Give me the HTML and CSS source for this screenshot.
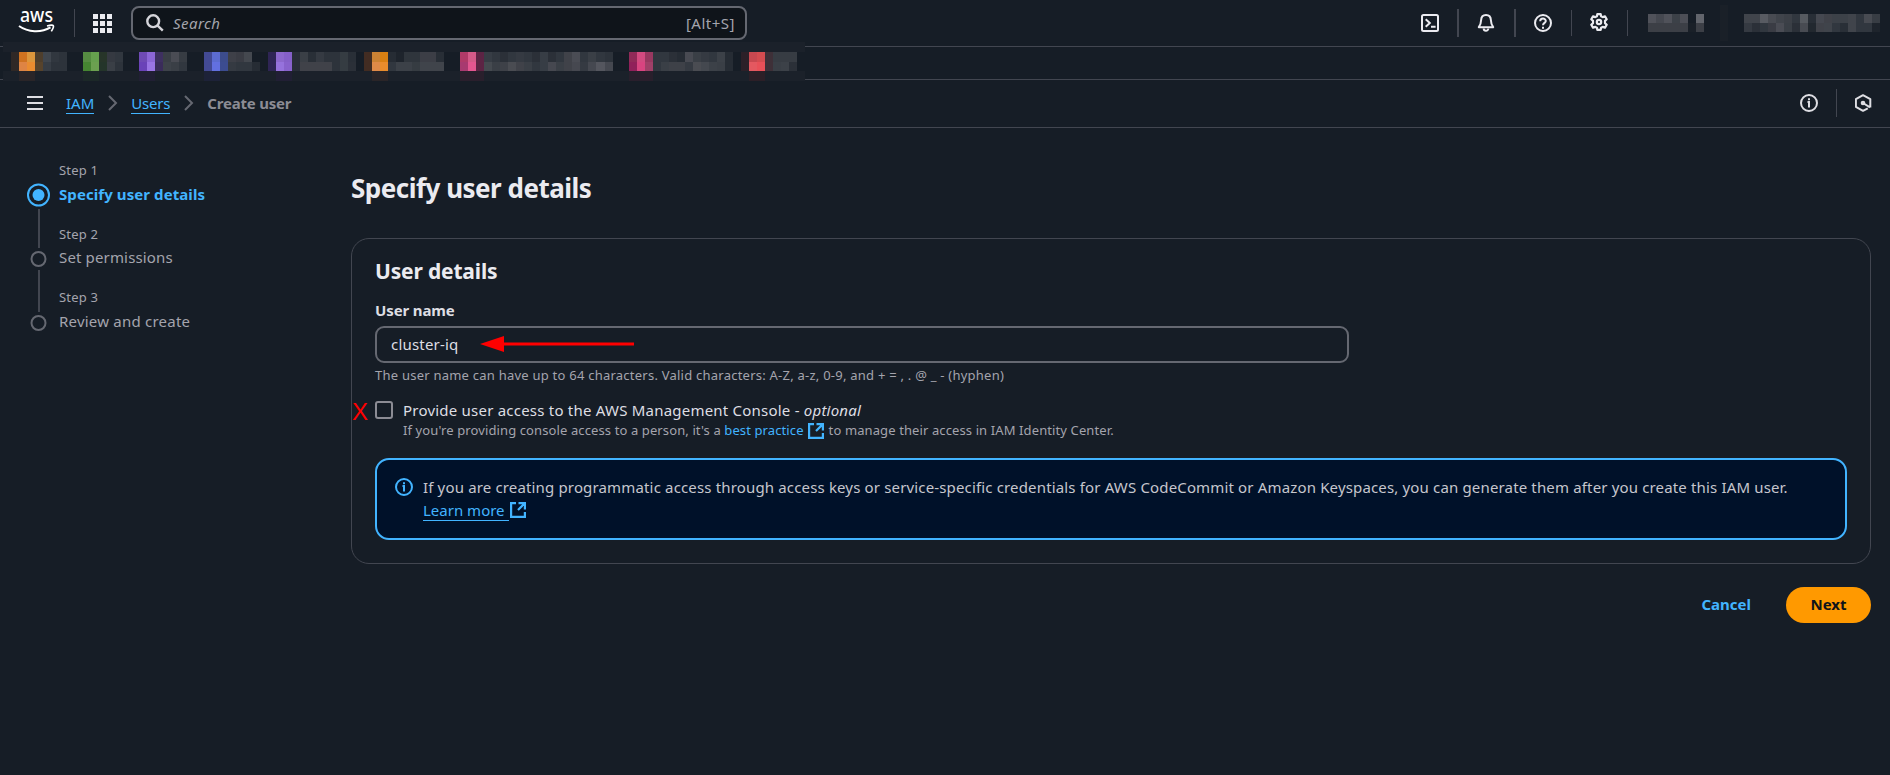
FILE: index.html
```html
<!DOCTYPE html>
<html lang="en">
<head>
<meta charset="utf-8">
<title>Create user | IAM</title>
<link rel="stylesheet" href="styles.css">
</head>
<body>
<header class="topbar">
  <svg class="logo" width="38" height="32" viewBox="0 0 38 32"><text x="2" y="15" class="logo-text" textLength="33" lengthAdjust="spacingAndGlyphs">aws</text><path d="M1 19C10 25.400 23 26 32.500 20.400" fill="none" stroke="#fff" stroke-width="2"/><path d="M29 19q5.500-1.600 6.300-.3t-2 5.700" fill="none" stroke="#fff" stroke-width="1.700"/></svg>
  <span class="divider"></span>
  <svg class="apps" width="19" height="19" viewBox="0 0 19 19" fill="#ebebf0"><path d="M0 0h5v5H0zM7 0h5v5H7zM14 0h5v5h-5zM0 7h5v5H0zM7 7h5v5H7zM14 7h5v5h-5zM0 14h5v5H0zM7 14h5v5H7zM14 14h5v5h-5z"/></svg>
  <div class="search">
    <svg width="18" height="18" viewBox="0 0 18 18" fill="none" stroke="#d5d5da" stroke-width="2.4"><circle cx="7.2" cy="7.2" r="5.9"/><path d="M11.4 11.4L16.8 16.6"/></svg>
    <span class="t search-hint">Search</span>
    <span class="t search-key">[Alt+S]</span>
  </div>
  <div class="tools">
    <svg width="18" height="18" viewBox="0 0 18 18" fill="none" stroke="#ebebf0" stroke-width="2"><rect x="1" y="1" width="16" height="16" rx="1.5"/><path d="M4.7 5.2L8.8 9l-4.100 3.800M10 12.700h4.600"/></svg>
    <span class="divider thick"></span>
    <svg class="bell" width="18" height="18" viewBox="0 0 18 18" fill="none" stroke="#ebebf0" stroke-width="2" stroke-linejoin="round"><path d="M1.800 13.200C3.400 11 4 9.800 4.100 6.300 4.200 3 6 1 9 1s4.800 2 4.900 5.300c.1 3.500.7 4.700 2.300 6.900z"/><path d="M6.700 14.500a2.300 2.300 0 0 0 4.600 0"/></svg>
    <span class="divider thick"></span>
    <svg class="help" width="18" height="18" viewBox="0 0 18 18" fill="none" stroke="#ebebf0" stroke-width="2"><circle cx="9" cy="9" r="8"/><path d="M6.200 7.300C6.200 3.700 11.800 3.800 11.800 7 11.800 8.900 9 8.900 9 11.300M9 12.700v2"/></svg>
    <span class="divider short"></span>
    <svg class="gear" width="18" height="18" viewBox="0 0 18 18" fill="none" stroke="#ebebf0" stroke-width="2.200" stroke-linejoin="round"><path d="M7.300 1.100h3.400l.4 2.100 1.600.9 2.300-.8 1.700 2.900L15 7.900v2.200l1.700 1.700-1.700 2.900-2.300-.8-1.600.9-.4 2.100H7.300l-.4-2.100-1.600-.9-2.300.8-1.700-2.900L3 10.100V7.900L1.300 6.200 3 3.300l2.300.8 1.600-.9z"/><circle cx="9" cy="9" r="2.200"/></svg>
    <span class="divider short"></span>
    <svg class="account" id="account" width="242" height="40" shape-rendering="crispEdges"></svg>
  </div>
</header>
<div class="favorites"><svg class="favorites-items" id="favorites" width="802" height="39" shape-rendering="crispEdges"></svg></div>
<nav class="crumbs">
  <svg class="menu" width="16" height="14" viewBox="0 0 16 14" fill="#dedee3"><path d="M0 0h16v2H0zM0 6h16v2H0zM0 12h16v2H0z"/></svg>
  <a class="t crumb-link">IAM</a>
  <svg class="chev" width="10" height="16" viewBox="0 0 10 16" fill="none" stroke="#656871" stroke-width="2"><path d="M1 1l7 7-7 7"/></svg>
  <a class="t crumb-link users">Users</a>
  <svg class="chev" width="10" height="16" viewBox="0 0 10 16" fill="none" stroke="#656871" stroke-width="2"><path d="M1 1l7 7-7 7"/></svg>
  <span class="t crumb-now">Create user</span>
  <div class="panel-tools">
    <svg width="18" height="18" viewBox="0 0 18 18" fill="none" stroke="#dedee3" stroke-width="2"><circle cx="9" cy="9" r="8"/><path d="M9 4.200v2M7.500 8H9v5.500"/></svg>
    <span class="divider"></span>
    <svg width="18" height="18" viewBox="0 0 18 18" fill="none" stroke="#dedee3" stroke-width="2" stroke-linejoin="round"><path d="M15.300 13.500V5.200L8 1.200.9 5.200v7.600L8 16.800l4.800-2.500M8 9l7 4.300"/><circle cx="8" cy="9" r="2.300" fill="#dedee3" stroke="none"/></svg>
  </div>
</nav>
<main class="page">
  <aside class="steps">
    <svg class="rail" width="24" height="160" viewBox="0 0 24 160" fill="none"><circle cx="11.500" cy="14" r="10.500" stroke="#42b4ff" stroke-width="2"/><circle cx="11.500" cy="14" r="6" fill="#42b4ff"/><path d="M12 28v39M12 89v42" stroke="#424650" stroke-width="2"/><circle cx="11.500" cy="78" r="7" stroke="#656871" stroke-width="2"/><circle cx="11.500" cy="142" r="7" stroke="#656871" stroke-width="2"/></svg>
    <ol class="step-list">
      <li><span class="t step-no">Step 1</span><b class="t step-name current">Specify user details</b></li>
      <li><span class="t step-no">Step 2</span><span class="t step-name">Set permissions</span></li>
      <li><span class="t step-no">Step 3</span><span class="t step-name last">Review and create</span></li>
    </ol>
  </aside>
  <section class="content">
    <h1 class="title"><span class="t">Specify user details</span></h1>
    <div class="card">
      <h2 class="card-title"><span class="t">User details</span></h2>
      <div class="label"><span class="t">User name</span></div>
      <div class="field"><span class="t">cluster-iq</span><svg class="arrow" width="156" height="18" viewBox="0 0 156 18"><path d="M22 9h132" stroke="#f00" stroke-width="3"/><path d="M0 9L24 1v16z" fill="#f00"/></svg></div>
      <div class="hint"><span class="t">The user name can have up to 64 characters. Valid characters: A-Z, a-z, 0-9, and + = , . @ _ - (hyphen)</span></div>
      <div class="option">
        <span class="cross">X</span>
        <span class="box"></span>
        <div class="option-text">
          <div class="option-label"><span class="t">Provide user access to the AWS Management Console - <i>optional</i></span></div>
          <div class="option-desc"><span class="t">If you're providing console access to a person, it's a <a>best practice</a></span><svg class="ext" width="16" height="16" viewBox="0 0 16 16" fill="none" stroke="#42b4ff" stroke-width="2.200"><path d="M6 1.100H1.100v13.800h13.800V10M8.500 1.100h6.400v6.400M14.900 1.100L8 8"/><path d="M11 1h4v4z" fill="#42b4ff" stroke="none"/></svg><span class="t">to manage their access in IAM Identity Center.</span></div>
        </div>
      </div>
      <div class="alert">
        <svg width="18" height="18" viewBox="0 0 18 18" fill="none" stroke="#42b4ff" stroke-width="2"><circle cx="9" cy="9" r="8"/><path d="M9 4.200v2M7.500 8H9v5.500"/></svg>
        <div class="alert-text">
          <div><span class="t">If you are creating programmatic access through access keys or service-specific credentials for AWS CodeCommit or Amazon Keyspaces, you can generate them after you create this IAM user.</span></div>
          <div class="learn"><a class="t">Learn more</a><svg class="ext" width="16" height="16" viewBox="0 0 16 16" fill="none" stroke="#42b4ff" stroke-width="2.200"><path d="M6 1.100H1.100v13.800h13.800V10M8.500 1.100h6.400v6.400M14.900 1.100L8 8"/><path d="M11 1h4v4z" fill="#42b4ff" stroke="none"/></svg></div>
        </div>
      </div>
    </div>
    <div class="actions"><a class="cancel"><span class="t">Cancel</span></a><button class="next"><span class="t">Next</span></button></div>
  </section>
</main>
<script src="mosaic.js"></script>
</body>
</html>
```
FILE: styles.css
```css
* { box-sizing: border-box; }
body { margin: 0; height: 775px; overflow: hidden; background: #161d26; color: #dedee3; font: 15px/24px "Noto Sans", "Open Sans", sans-serif; }
svg { display: block; flex: none; }
.t { display: inline-block; white-space: nowrap; }
h1, h2, ol { margin: 0; padding: 0; }
ol { list-style: none; }

.topbar { display: flex; align-items: center; height: 47px; padding-left: 18px; border-bottom: 1px solid #424650; }
.logo { margin-right: 18px; overflow: visible; }
.logo-text { font: 500 20px "Noto Sans", sans-serif; fill: #fff; }
.divider { flex: none; width: 1px; height: 28px; background: #424650; }
.divider.thick { width: 2px; }
.divider.short { height: 26px; }
.apps { margin: 0 19px 0 18px; }
.search { display: flex; align-items: center; width: 616px; height: 34px; padding: 0 10px 0 13px; border: 2px solid #656871; border-radius: 8px; background: #0f141a; color: #a4a4ad; }
.search-hint { margin-left: 9px; font-style: italic; letter-spacing: 0.45px; }
.search-key { margin-left: auto; letter-spacing: 0.5px; }
.tools { display: flex; align-items: center; margin-left: auto; gap: 18.4px; }
.bell, .help { margin: 0 0.6px 0 -0.6px; }
.gear { margin-top: -2px; }
.account { margin-left: 1.8px; }

.favorites { position: relative; height: 33px; border-bottom: 1px solid #424650; }
.favorites-items { position: absolute; left: 3px; top: -5px; }

.crumbs { display: flex; align-items: center; height: 48px; padding: 0 17px 1px 27px; border-bottom: 1px solid #424650; }
.crumb-link { height: 21px; line-height: 21px; color: #42b4ff; border-bottom: 1px solid #42b4ff; }
.users { letter-spacing: -0.2px; }
.menu { margin-right: 23px; }
.chev { margin: 0 13px 0 14px; }
.crumb-now { height: 24px; line-height: 25px; color: #8c8c94; font-weight: 700; letter-spacing: -0.2px; }
.panel-tools { display: flex; align-items: center; gap: 18px; margin-left: auto; }

.page { display: flex; padding: 30px 19px 0 27px; }
.steps { display: flex; width: 324px; gap: 8px; }
.rail { margin-top: 23px; }
.step-list li { display: flex; flex-direction: column; align-items: flex-start; height: 63.6px; color: #a4a4ad; }
.step-no { font-size: 13px; letter-spacing: 0.2px; }
.step-name { line-height: 23px; letter-spacing: 0.15px; }
.step-name.last { line-height: 25px; letter-spacing: 0.22px; }
.step-name.current { line-height: 24px; color: #42b4ff; letter-spacing: 0.08px; }

.content { flex: 1; }
.title { height: 80px; padding-top: 12px; font-size: 26px; line-height: 36px; color: #ebebf0; letter-spacing: -0.5px; }
.card { height: 326px; padding: 19px 23px 20px; border: 1px solid #424650; border-radius: 18px; }
.card-title { height: 40px; font-size: 21px; line-height: 26px; color: #ebebf0; letter-spacing: -0.17px; }
.label { height: 28px; line-height: 24px; font-weight: 700; letter-spacing: -0.12px; }
.field { display: flex; align-items: center; width: 974px; height: 37px; padding: 0 0 2px 14px; border: 2px solid #656871; border-radius: 9px; letter-spacing: 0.2px; }
.arrow { margin-left: 21px; }
.hint { height: 38px; font-size: 13px; color: #a4a4ad; letter-spacing: 0.235px; }
.option { position: relative; display: flex; gap: 10px; height: 57px; }
.cross { position: absolute; left: -23px; top: -1px; font: 24px/24px "Liberation Sans", sans-serif; color: #f00; }
.box { width: 18px; height: 18px; border: 2px solid #8c8c94; border-radius: 3px; }
.option-label { height: 19px; line-height: 18px; letter-spacing: 0.22px; }
.option-desc { display: flex; align-items: center; height: 20px; font-size: 13px; color: #a4a4ad; letter-spacing: 0.11px; }
.option-desc a, .learn { color: #42b4ff; }
.option-desc .ext { margin: 2px 5px 0 4px; }
.alert { display: flex; gap: 10px; height: 82px; padding: 18px; border: 2px solid #42b4ff; border-radius: 14px; background: #001129; color: #c6c6cd; }
.alert-text { margin-top: -2px; line-height: 23px; letter-spacing: 0.155px; }
.learn { display: flex; align-items: center; }
.learn a { height: 22px; padding-right: 4px; border-bottom: 1px solid #42b4ff; letter-spacing: 0; }
.learn .ext { margin-left: 1px; }
.actions { display: flex; justify-content: flex-end; align-items: center; height: 36px; margin-top: 23px; gap: 35px; line-height: 22px; font-weight: 700; }
.cancel { height: 24px; color: #42b4ff; }
.next { width: 85px; height: 36px; padding: 0 0 2px; border: 0; border-radius: 18px; background: #f90; color: #0f141a; font: inherit; }
```
FILE: mosaic.js
```js
const NS = 'http://www.w3.org/2000/svg';
function rect(svg, x, y, w, h, fill) {
  const r = document.createElementNS(NS, 'rect');
  Object.entries({ x, y, width: w, height: h, fill }).forEach(([k, v]) => r.setAttribute(k, v));
  svg.appendChild(r);
}
// Each group: first cell index, then the colours of its two rows.
const favorites = [
  [1, '2f2826 cf7220 dc963c 4e3e2c 40464e 31373f 2d333b', '2f2826 de8444 ea8c30 57432c 373d45 2d333b 2d333b'],
  [10, '568c42 66a04e 273529 353941 31373f', '468632 6ba050 24352a 3a3f46 2d333b'],
  [17, '6f4ab4 8c66d6 3e3060 3a3f46 4a4c54 373c43', '6a42b8 9a74e4 3a2c5a 3e434a 3a3f46 31373f'],
  [25, '434a94 5c6cd0 3c4c8c 3e4048 3a3c44 44484f 161d26', '434a94 6270e0 3c4c90 353a42 31373f 31373f 262c34'],
  [33, '2f2555 8c68cc 8560c8 292e38 3a3f46 292f37 353a42 2d333b 2d333b 353c42 292f37', '2f2555 9672dc 8862cc 292e38 404249 404249 404249 404249 2d333b 353c42 2b3038'],
  [45, '422c22 cc8234 d88012 262c34 1e242c 2f353c 2f353c 3c3e46 3c3e46 282e36', '422c22 e08a48 e88c2c 31373f 3c4148 3c4148 363c42 40444b 40444b 40444b'],
  [57, 'b03a68 d45a88 5c2444 373d45 31373f 2b3038 31373f 353a42 31373f 2b3038 373d45 2b3038 31373f 404249 4a4c54 31373f 3a3f46 31373f 2d333b', 'a83a70 e45690 5c2444 454a50 3a3f46 3e4148 4a4c52 404249 3a3f46 31373f 373d45 464850 3a3f46 404249 464850 353a42 454850 54565e 454850'],
  [78, '902a58 d24a80 983860 31373f 31373f 2b3038 262c34 484a52 3a3f46 353a42 31373f 3c4148 262c34', '90205a d84480 a04068 31373f 3a3f46 3e4148 3e4148 353a42 4a4c52 44484f 3c4148 3a3f46 262c34'],
  [92, '2c2028 c84850 d44c50 3e3038 373c43 373c43 373c43', '2c2028 e45860 e85058 3e3038 3a3f46 3c4148 2b3038'],
];
const fav = document.getElementById('favorites');
rect(fav, 0, 0, 802, 10, '#1b212a');
rect(fav, 0, 10, 802, 19, '#161d26');
rect(fav, 0, 29, 802, 10, '#1b212a');
const edge = i => Math.round(i * 8.02);
favorites.forEach(([start, top, bottom]) => {
  [top, bottom].forEach((row, r) => row.split(' ').forEach((c, i) => {
    const x = edge(start + i);
    rect(fav, x, r ? 20 : 10, edge(start + i + 1) - x, r ? 9 : 10, '#' + c);
  }));
});
[[2, 2, '2a2528'], [10, 2, '1c2828'], [17, 2, '211f34'], [25, 2, '1d2238'], [34, 2, '211f34'], [46, 2, '2a2528'], [57, 3, '291f2c'], [78, 3, '291f2c'], [93, 2, '2c1f27']]
  .forEach(([i, n, c]) => rect(fav, edge(i), 29, edge(i + n) - edge(i), 10, '#' + c));

const acct = document.getElementById('account');
[[0, '50525a 454850 50525a 3c4148 4c4e56 161d26 62656c', '3c3f46 3c3f46 3c3f46 3c3f46 3c3f46 1a2028 3c3f46'],
 [96, '40444b 40444b 585b62 484b52 40444b 3c4047 31373f 565a60 282e36 454850 404249 3c4148 3c4148 40444b 31373f 484b52 383d44', '353a42 2b3038 31373f 3a3c44 4a4c54 3a3f46 2b3038 484b52 22282f 404249 40444b 31373f 292f37 40444b 31373f 31373f 1e242c']]
  .forEach(([x0, top, bottom]) => [top, bottom].forEach((row, r) => row.split(' ').forEach((c, i) =>
    rect(acct, x0 + i * 8, 11 + r * 9, 8, 9, '#' + c))));
rect(acct, 72, 2, 8, 36, '#1a2028');
```
